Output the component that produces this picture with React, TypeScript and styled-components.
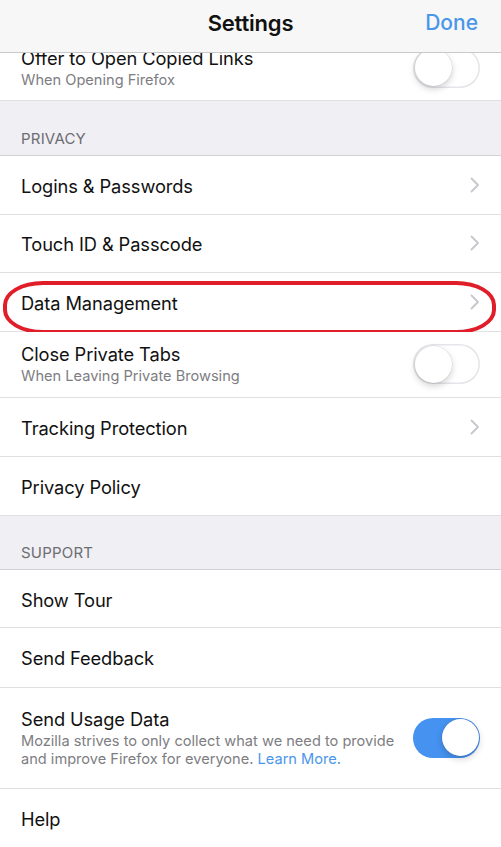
import React from 'react';
import styled, { createGlobalStyle } from 'styled-components';

const GlobalStyle = createGlobalStyle`
  html, body {
    margin: 0;
    padding: 0;
    background: #efeff4;
  }
  body {
    font-family: Inter, "Noto Sans", "Liberation Sans", sans-serif;
    -webkit-font-smoothing: antialiased;
  }
`;

const Screen = styled.main`
  width: 501px;
  height: 847px;
  overflow: hidden;
  display: flex;
  flex-direction: column;
  background: #efeff4;
`;

const NavBar = styled.header`
  height: 53px;
  box-sizing: border-box;
  flex-shrink: 0;
  display: grid;
  grid-template-columns: 1fr auto 1fr;
  align-items: center;
  padding: 0 23px 7px;
  background: #f7f7f7;
  border-bottom: 1px solid #c9c9cc;
  position: relative;
  z-index: 2;
`;

const Title = styled.h1`
  grid-column: 2;
  margin: 0;
  font-size: 22px;
  font-weight: 600;
  color: #111;
  letter-spacing: -0.2px;
`;

const DoneButton = styled.button`
  grid-column: 3;
  justify-self: end;
  border: none;
  background: none;
  padding: 0;
  font-family: inherit;
  font-size: 21px;
  font-weight: 500;
  color: #4a96ea;
`;

const Viewport = styled.div`
  flex: 1;
  overflow: hidden;
`;

const List = styled.div`
  margin-top: -18px;
`;

const Row = styled.div<{ height: number }>`
  position: relative;
  box-sizing: border-box;
  height: ${p => p.height}px;
  display: flex;
  align-items: center;
  padding: 0 21px;
  background: #fff;
  border-bottom: 1px solid #e0e0e3;
`;

const SectionHeader = styled.div`
  box-sizing: border-box;
  height: 54.5px;
  display: flex;
  align-items: flex-end;
  padding: 0 21px 8px;
  background: #efeff4;
  border-bottom: 1px solid #d2d2d6;
  font-size: 15px;
  line-height: 16px;
  color: #6d6d72;
  letter-spacing: 0.2px;
`;

const TextBlock = styled.div`
  flex: 1;
  min-width: 0;
  padding-right: 12px;
`;

const Label = styled.div<{ solo?: boolean }>`
  margin-top: ${p => (p.solo ? '3px' : '0')};
  font-size: 18.3px;
  line-height: 23px;
  color: #111;
  letter-spacing: -0.1px;
`;

const Detail = styled.div`
  margin-top: 1px;
  font-size: 14.6px;
  line-height: 18px;
  color: #7d7d82;
`;

const Link = styled.span`
  color: #4a96ea;
`;

const Switch = styled.span<{ on?: boolean }>`
  flex-shrink: 0;
  box-sizing: border-box;
  width: 67px;
  height: 40px;
  border-radius: 20px;
  display: flex;
  align-items: center;
  justify-content: ${p => (p.on ? 'flex-end' : 'flex-start')};
  padding: 1.5px;
  background: ${p => (p.on ? '#4592f0' : '#fff')};
  box-shadow: ${p => (p.on ? 'none' : 'inset 0 0 0 1.5px #e5e5ea')};
`;

const Knob = styled.span`
  width: 37px;
  height: 37px;
  border-radius: 50%;
  background: #fff;
  box-shadow: 0 3px 7px rgba(0, 0, 0, 0.18), 0 0 0 0.5px rgba(0, 0, 0, 0.1);
`;

const Highlight = styled.span`
  position: absolute;
  left: 3px;
  right: 5px;
  top: 8px;
  bottom: -3px;
  border: 4px solid #e01e2a;
  border-radius: 40px / 24px;
  pointer-events: none;
`;

const Chevron = () => (
  <svg width="10" height="16" viewBox="0 0 10 16" style={{ flexShrink: 0 }}>
    <polyline
      points="1.5,1.5 8,8 1.5,14.5"
      fill="none"
      stroke="#c7c7cc"
      strokeWidth="1.8"
      strokeLinecap="round"
      strokeLinejoin="round"
    />
  </svg>
);

const Toggle: React.FC<{ on?: boolean }> = ({ on }) => (
  <Switch on={on}>
    <Knob />
  </Switch>
);

export default function App() {
  return (
    <>
      <GlobalStyle />
      <Screen>
        <NavBar>
          <Title>Settings</Title>
          <DoneButton>Done</DoneButton>
        </NavBar>
        <Viewport>
          <List>
            <Row height={66}>
              <TextBlock>
                <Label>Offer to Open Copied Links</Label>
                <Detail>When Opening Firefox</Detail>
              </TextBlock>
              <Toggle />
            </Row>

            <SectionHeader>PRIVACY</SectionHeader>
            <Row height={59}>
              <TextBlock>
                <Label solo>Logins &amp; Passwords</Label>
              </TextBlock>
              <Chevron />
            </Row>
            <Row height={58}>
              <TextBlock>
                <Label solo>Touch ID &amp; Passcode</Label>
              </TextBlock>
              <Chevron />
            </Row>
            <Row height={59}>
              <TextBlock>
                <Label solo>Data Management</Label>
              </TextBlock>
              <Chevron />
              <Highlight />
            </Row>
            <Row height={66}>
              <TextBlock>
                <Label>Close Private Tabs</Label>
                <Detail>When Leaving Private Browsing</Detail>
              </TextBlock>
              <Toggle />
            </Row>
            <Row height={59.5}>
              <TextBlock>
                <Label solo>Tracking Protection</Label>
              </TextBlock>
              <Chevron />
            </Row>
            <Row height={58.5}>
              <TextBlock>
                <Label solo>Privacy Policy</Label>
              </TextBlock>
            </Row>

            <SectionHeader>SUPPORT</SectionHeader>
            <Row height={58}>
              <TextBlock>
                <Label solo>Show Tour</Label>
              </TextBlock>
            </Row>
            <Row height={59.5}>
              <TextBlock>
                <Label solo>Send Feedback</Label>
              </TextBlock>
            </Row>
            <Row height={101}>
              <TextBlock>
                <Label>Send Usage Data</Label>
                <Detail>
                  Mozilla strives to only collect what we need to provide and
                  improve Firefox for everyone. <Link>Learn More.</Link>
                </Detail>
              </TextBlock>
              <Toggle on />
            </Row>
            <Row height={59}>
              <TextBlock>
                <Label solo>Help</Label>
              </TextBlock>
            </Row>
          </List>
        </Viewport>
      </Screen>
    </>
  );
}
